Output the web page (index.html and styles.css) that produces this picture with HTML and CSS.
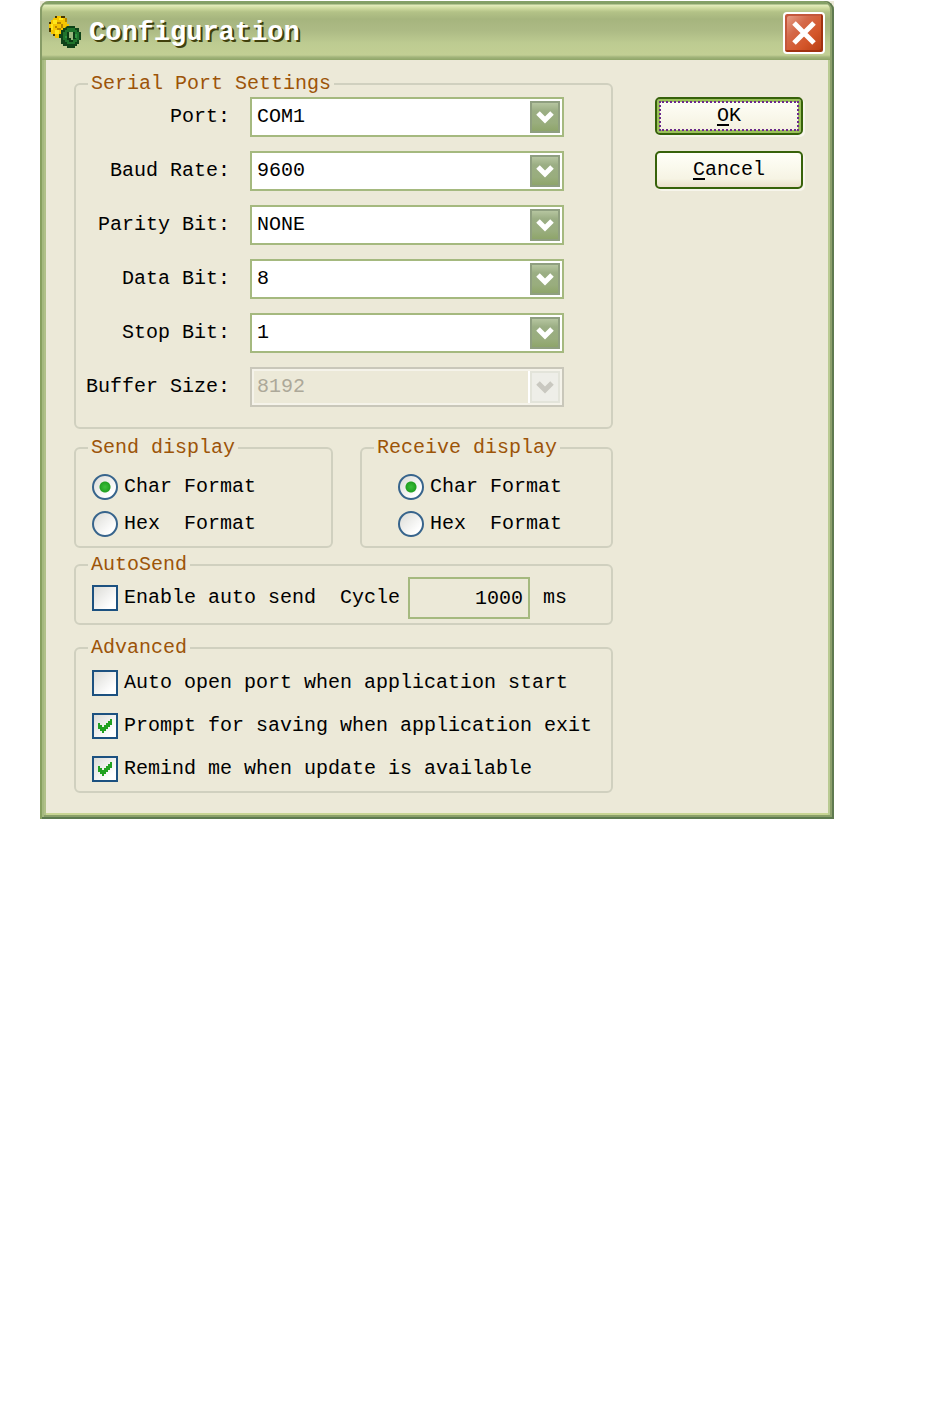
FILE: index.html
```html
<!DOCTYPE html>
<html lang="en">
<head>
    <meta charset="UTF-8">
    <meta name="viewport" content="width=device-width, initial-scale=1.0">
    <title>Configuration</title>
    <link rel="stylesheet" href="styles.css">
</head>
<body>

    <div class="dialog">
        <!-- Title bar -->
        <div class="title-bar">
            <svg class="title-icon" viewBox="0 0 34 34" aria-hidden="true">
                <path d="M4 2h2V0h10v2h2v6h2v8h-2v4h-4v2H6v-2H4v-2H2v-4H0V6h2V4h2z" fill="#f5c400"/>
                <path d="M4 4h4v4H4zM10 2h4v2h-4zM2 8h2v6H2zM6 14h4v4H6z" fill="#ffe61a"/>
                <path d="M6 0h2v2H6zM12 0h4v2h-4zM0 12h2v4H0zM0 6h2v2H0zM4 18h2v2H4zM10 18h2v4h-2z" fill="#4a3800"/>
                <path d="M16 2h2v4h-2zM8 6h4v2H8zM6 10h2v2H6zM12 8h2v4h-2zM8 12h4v2H8z" fill="#b58500"/>
                <path d="M18 10h8v2h4v4h2v8h-2v4h-2v2h-2v2h-8v-2h-4v-2h-2v-6h-2v-4h2v-4h2v-2h2z" fill="#0f4319"/>
                <path d="M18 12h8v2h2v2h2v8h-2v2h-2v2h-8v-2h-2v-2h-2v-8h2v-2h2z" fill="#1f742c"/>
                <path d="M18 16h8v2h1v5h-3v3h-4v-2h-2z" fill="#0c3a15"/>
                <path d="M20 16h4v8h-2v-2h-2z" fill="#9bb87e"/>
                <path d="M26 18h2v4h-2zM16 20h2v2h-2z" fill="#2f9440"/>
            </svg>
            <h1>Configuration</h1>
            <button type="button" class="close-button" aria-label="Close">
                <svg viewBox="0 0 24 24" aria-hidden="true">
                    <path d="M2 2L22 22M22 2L2 22" stroke="#fff" stroke-width="5"/>
                </svg>
            </button>
        </div>

        <form class="dialog-body">
            <div class="settings">
                <fieldset class="port-settings">
                    <legend>Serial Port Settings</legend>
                    <div class="port-grid">
                        <label for="port">Port:</label>
                        <select id="port"><option>COM1</option></select>
                        <label for="baud">Baud Rate:</label>
                        <select id="baud"><option>9600</option></select>
                        <label for="parity">Parity Bit:</label>
                        <select id="parity"><option>NONE</option></select>
                        <label for="data">Data Bit:</label>
                        <select id="data"><option>8</option></select>
                        <label for="stop">Stop Bit:</label>
                        <select id="stop"><option>1</option></select>
                        <label for="buffer">Buffer Size:</label>
                        <select id="buffer" disabled><option>8192</option></select>
                    </div>
                </fieldset>

                <div class="display-row">
                    <fieldset class="send-display">
                        <legend>Send display</legend>
                        <div class="options">
                            <label class="option"><input type="radio" name="send" checked>Char Format</label>
                            <label class="option"><input type="radio" name="send">Hex  Format</label>
                        </div>
                    </fieldset>
                    <fieldset class="receive-display">
                        <legend>Receive display</legend>
                        <div class="options">
                            <label class="option"><input type="radio" name="receive" checked>Char Format</label>
                            <label class="option"><input type="radio" name="receive">Hex  Format</label>
                        </div>
                    </fieldset>
                </div>

                <fieldset class="auto-send">
                    <legend>AutoSend</legend>
                    <div class="auto-row">
                        <label class="option"><input type="checkbox">Enable auto send</label>
                        <label class="cycle" for="cycle">Cycle</label>
                        <input type="text" id="cycle" value="1000">
                        <span class="unit">ms</span>
                    </div>
                </fieldset>

                <fieldset class="advanced">
                    <legend>Advanced</legend>
                    <div class="options">
                        <label class="option"><input type="checkbox">Auto open port when application start</label>
                        <label class="option"><input type="checkbox" checked>Prompt for saving when application exit</label>
                        <label class="option"><input type="checkbox" checked>Remind me when update is available</label>
                    </div>
                </fieldset>
            </div>

            <!-- Dialog buttons -->
            <div class="actions">
                <button type="submit" class="action default"><u>O</u>K</button>
                <button type="button" class="action"><u>C</u>ancel</button>
            </div>
        </form>
    </div>

</body>
</html>
```

FILE: styles.css
```css
/* General styles */
* {
    box-sizing: border-box;
}

body {
    margin: 0;
    padding: 1px 116px 0 40px;
    background-color: #fff;
    color: #000;
    font-family: "Liberation Mono", monospace;
    font-size: 20px;
    line-height: 24px;
}

button,
input,
select {
    margin: 0;
    color: inherit;
    font: inherit;
}

/* Dialog frame */
.dialog {
    background-color: #ece9d8;
}

.title-bar {
    display: flex;
    align-items: center;
    padding: 11px 9px 6px 9px;
    border-radius: 9px 9px 0 0;
    background: linear-gradient(#84a066 0, #84a066 3px, #e4edbd 4px, #cfdca0 7px, #b3c287 11px, #a6b57e 18px, #adbb85 30px, #bdcb91 42px, #c2cf94 54px, #a3b57c 56px, #8fa568 59px);
    box-shadow: inset 2px 0 #879c67, inset -2px 0 #5f7a50, inset -4px 0 #8ea36d;
}

.title-icon {
    width: 34px;
    height: 34px;
}

.title-bar h1 {
    flex: 1;
    margin: 0 0 0 6px;
    color: #fff;
    font-size: 27px;
    line-height: 32px;
    text-shadow: 2px 2px #40400c;
}

.close-button {
    display: flex;
    align-items: center;
    justify-content: center;
    width: 42px;
    height: 42px;
    padding: 0;
    border: 2px solid #fff;
    border-radius: 4px;
    background: linear-gradient(135deg, #e9a58f, #d4694a 35%, #d4562a 65%, #b53c12);
    box-shadow: inset -2px -2px #a03210, inset 2px 2px #c4573c;
}

.close-button svg {
    width: 24px;
    height: 24px;
}

.dialog-body {
    display: grid;
    grid-template-columns: 1fr 148px;
    column-gap: 42px;
    padding: 12px 31px 26px 34px;
    box-shadow:
        inset 2px 0 #87a05f, inset -2px 0 #5f7a50, inset 0 -2px #5d7a50,
        inset 4px 0 #a5b97f, inset -4px 0 #8ca06c, inset 0 -4px #8a9f6a,
        inset 6px 0 #b0c088, inset -6px 0 #b9ca92, inset 0 -6px #c8d594;
}

/* Group boxes */
fieldset {
    min-width: 0;
    margin: 0;
    padding: 0;
    border: 2px solid #d0d0bf;
    border-radius: 6px;
}

legend {
    margin-left: 12px;
    padding: 0 3px;
    color: #9c5408;
}

.port-settings {
    margin-bottom: 7px;
}

.port-grid {
    display: grid;
    grid-template-columns: 154px 1fr;
    align-items: center;
    gap: 14px 20px;
    padding: 1px 47px 20px 0;
}

.port-grid label {
    text-align: right;
}

.port-grid select {
    appearance: none;
    height: 40px;
    padding: 0 34px 0 5px;
    border: 2px solid #a5b97f;
    border-radius: 0;
    background: #fff url("data:image/svg+xml,%3Csvg xmlns='http://www.w3.org/2000/svg' width='30' height='32'%3E%3ClinearGradient id='g' x2='0' y2='1'%3E%3Cstop stop-color='%23b9c8a3'/%3E%3Cstop offset='.3' stop-color='%239bae84'/%3E%3Cstop offset='.7' stop-color='%2399ad7d'/%3E%3Cstop offset='1' stop-color='%238da468'/%3E%3C/linearGradient%3E%3Crect x='1' y='1' width='28' height='30' fill='url(%23g)' stroke='%238f9f80' stroke-width='2'/%3E%3Cpath d='M8 12L15 19L22 12' fill='none' stroke='%23fff' stroke-width='5'/%3E%3C/svg%3E") no-repeat right 2px center;
    opacity: 1;
}

.port-grid select:disabled {
    border-color: #c9c7ba;
    background: #ece9d8 url("data:image/svg+xml,%3Csvg xmlns='http://www.w3.org/2000/svg' width='34' height='36'%3E%3Crect width='34' height='36' fill='%23fff'/%3E%3Crect x='3' y='3' width='28' height='30' fill='%23eeeee8' stroke='%23e3e4da' stroke-width='2'/%3E%3Cpath d='M10 14L17 21L24 14' fill='none' stroke='%23c9c8c0' stroke-width='5'/%3E%3C/svg%3E") no-repeat right center;
    box-shadow: inset 0 0 0 2px #f5f3ea;
    color: #aca899;
}

/* Radio and check rows */
.options {
    display: flex;
    flex-direction: column;
}

.option {
    display: flex;
    align-items: center;
    gap: 6px;
    white-space: pre;
}

.option input {
    appearance: none;
    flex: none;
    width: 26px;
    height: 26px;
    border: 2px solid #1c5180;
    background: linear-gradient(135deg, #dcdcd7, #fff 80%);
}

.option input[type="radio"] {
    border-color: #37648c;
    border-radius: 50%;
}

.option input[type="radio"]:checked {
    background: radial-gradient(circle, #3cc03c 0, #22a122 5px, transparent 6px), linear-gradient(135deg, #dcdcd7, #fff 80%);
}

.option input[type="checkbox"]:checked {
    background: url("data:image/svg+xml,%3Csvg xmlns='http://www.w3.org/2000/svg' width='22' height='22'%3E%3Cpath d='M4 8h2v2h2v2h2v-2h2V8h2V6h2V4h2v6h-2v2h-2v2h-2v2h-2v2H8v-2H6v-2H4z' fill='%2321a121'/%3E%3C/svg%3E") no-repeat center, linear-gradient(135deg, #dcdcd7, #fff 80%);
}

.display-row {
    display: flex;
    gap: 27px;
    margin-bottom: 5px;
}

.send-display {
    flex: 259;
}

.receive-display {
    flex: 253;
}

.display-row .options {
    gap: 11px;
    padding: 14px 0 9px 16px;
}

.receive-display .options {
    padding-left: 36px;
}

.auto-send {
    margin-bottom: 11px;
}

.auto-row {
    display: flex;
    align-items: center;
    padding: 0 0 4px 16px;
}

.auto-row .cycle {
    margin: 0 8px 0 24px;
}

.auto-row input[type="text"] {
    width: 122px;
    height: 42px;
    padding: 0 5px;
    border: 2px solid #a5b97f;
    background-color: #ece9d8;
    text-align: right;
}

.auto-row .unit {
    margin-left: 13px;
}

.advanced .options {
    gap: 17px;
    padding: 10px 0 9px 16px;
}

/* Buttons */
.actions {
    display: flex;
    flex-direction: column;
    gap: 16px;
    padding-top: 25px;
}

.action {
    height: 38px;
    padding: 0;
    border: 2px solid #37620a;
    border-radius: 5px;
    background: linear-gradient(#fffff8, #f6f4e4 75%, #ece0cc);
    box-shadow: 2px 2px #f7f5ec;
}

.action.default {
    outline: 2px dotted #6b2a8c;
    outline-offset: -6px;
    background: linear-gradient(#fffff8, #f3f0de);
    box-shadow: 2px 2px #f7f5ec, inset 0 0 0 3px #9cc05c;
}

.action u {
    text-decoration-thickness: 2px;
    text-underline-offset: 3px;
}
```
